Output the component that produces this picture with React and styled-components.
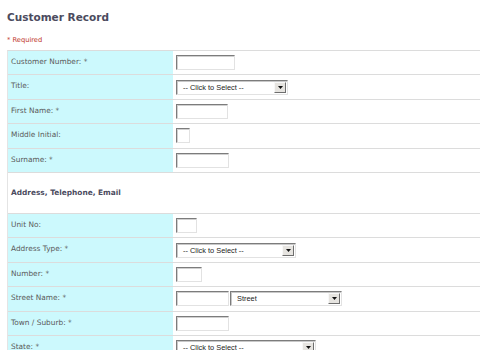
import styled, { createGlobalStyle } from "styled-components";

const GlobalStyle = createGlobalStyle`
  html, body {
    margin: 0;
    padding: 0;
    background: #ffffff;
  }
  body {
    font-family: "DejaVu Sans", Verdana, sans-serif;
    overflow: hidden;
  }
`;

const Page = styled.div`
  padding: 0 0 0 7px;
  width: 473px;
`;

const Title = styled.h1`
  margin: 0;
  padding-top: 10px;
  height: 16px;
  font-size: 10.5px;
  line-height: 14px;
  font-weight: bold;
  color: #4b4b5e;
`;

const Required = styled.div`
  margin-top: 9px;
  height: 15px;
  font-size: 6.7px;
  line-height: 10px;
  color: #c0352b;
`;

const Table = styled.div`
  display: grid;
  grid-template-columns: 165px 1fr;
  border-top: 1px solid #dcdcdc;
  border-left: 1px solid #e4e4e4;
`;

const Label = styled.div`
  height: 23.4px;
  background: #ccf9fd;
  border-bottom: 1px solid #dcdcdc;
  padding: 6px 0 0 3px;
  box-sizing: border-box;
  font-size: 7.4px;
  line-height: 10px;
  color: #5a5a5a;
  box-sizing: content-box;
  height: 17.4px;
`;

const Field = styled.div`
  height: 23.4px;
  border-bottom: 1px solid #dcdcdc;
  display: flex;
  align-items: center;
  gap: 1px;
  padding-left: 3px;
`;

const SectionHeader = styled.div`
  grid-column: 1 / span 2;
  height: 39px;
  border-bottom: 1px solid #dcdcdc;
  display: flex;
  align-items: center;
  padding: 0 0 1px 3px;
  font-size: 7.4px;
  font-weight: bold;
  color: #4b4b5e;
`;

const Input = styled.div`
  width: ${(p) => p.$w}px;
  height: 15px;
  box-sizing: border-box;
  background: #fff;
  border: 1px solid;
  border-color: #7c7c7c #e2e2e2 #e2e2e2 #7c7c7c;
  box-shadow: inset 1px 1px 0 #d0d0d0;
`;

const SelectBox = styled.div`
  width: ${(p) => p.$w}px;
  height: 15px;
  box-sizing: border-box;
  background: #fff;
  border: 1px solid;
  border-color: #7c7c7c #e2e2e2 #e2e2e2 #7c7c7c;
  box-shadow: inset 1px 1px 0 #c8c8c8;
  display: flex;
  align-items: center;
  padding: 1px 1px 1px 0;
`;

const SelectText = styled.span`
  flex: 1;
  padding-left: ${(p) => (p.$pad ? p.$pad : 6)}px;
  font-family: "Liberation Sans", Arial, sans-serif;
  font-size: 7.4px;
  color: #222;
  white-space: nowrap;
`;

const ArrowButton = styled.div`
  width: 12px;
  height: 11px;
  box-sizing: border-box;
  background: #e6e4e0;
  border: 1px solid;
  border-color: #f8f8f8 #6e6e6e #6e6e6e #f8f8f8;
  display: flex;
  align-items: center;
  justify-content: center;
`;

const Select = ({ w, text = "-- Click to Select --", pad }) => (
  <SelectBox $w={w}>
    <SelectText $pad={pad}>{text}</SelectText>
    <ArrowButton>
      <svg width="5" height="3" viewBox="0 0 5 3">
        <polygon points="0,0 5,0 2.5,3" fill="#111" />
      </svg>
    </ArrowButton>
  </SelectBox>
);

const Row = ({ label, children }) => (
  <>
    <Label>{label}</Label>
    <Field>{children}</Field>
  </>
);

export default function App() {
  return (
    <Page>
      <GlobalStyle />
      <Title>Customer Record</Title>
      <Required>* Required</Required>
      <Table>
        <Row label="Customer Number: *">
          <Input $w={59} />
        </Row>
        <Row label="Title:">
          <Select w={112} />
        </Row>
        <Row label="First Name: *">
          <Input $w={52} />
        </Row>
        <Row label="Middle Initial:">
          <Input $w={14} />
        </Row>
        <Row label="Surname: *">
          <Input $w={53} />
        </Row>
        <SectionHeader>Address, Telephone, Email</SectionHeader>
        <Row label="Unit No:">
          <Input $w={21} />
        </Row>
        <Row label="Address Type: *">
          <Select w={120} />
        </Row>
        <Row label="Number: *">
          <Input $w={26} />
        </Row>
        <Row label="Street Name: *">
          <Input $w={53} />
          <Select w={112} text="Street" pad={6} />
        </Row>
        <Row label="Town / Suburb: *">
          <Input $w={53} />
        </Row>
        <Row label="State: *">
          <Select w={140} />
        </Row>
      </Table>
    </Page>
  );
}
